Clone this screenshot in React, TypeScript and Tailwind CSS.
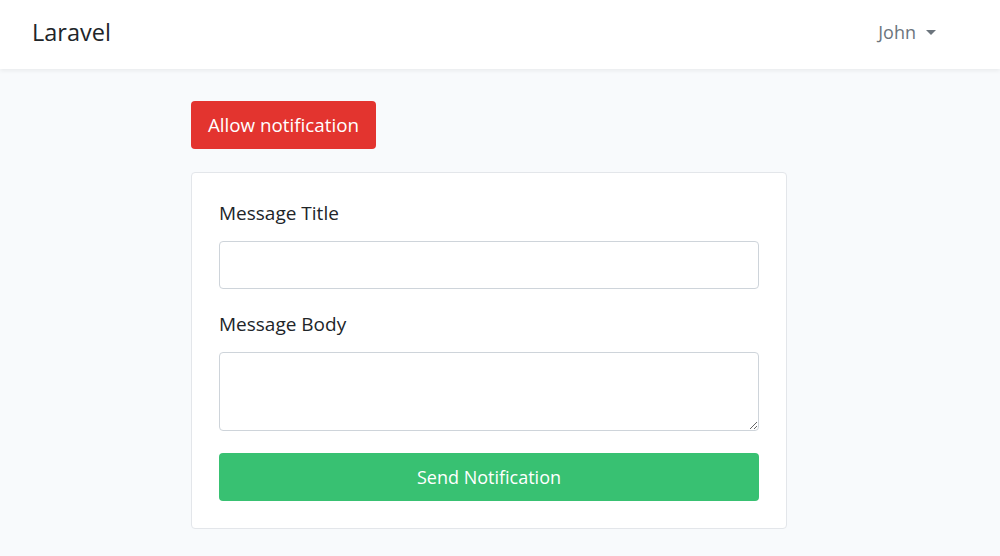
export default function App() {
  const font = { fontFamily: '"Open Sans", "Noto Sans", sans-serif' };
  return (
    <div className="min-h-[556px] bg-[#f8fafc] text-[#212529]" style={font}>
      <nav className="h-[69px] bg-white shadow-[0_2px_4px_rgba(0,0,0,0.06)] flex items-center justify-between pl-[32px] pr-[64px] pb-[4px]">
        <span className="text-[23.5px] text-[#212529]">Laravel</span>
        <span className="flex items-center gap-[10px] text-[18px] text-[#6c757d]">
          John
          <span className="w-0 h-0 border-l-[5.5px] border-r-[5.5px] border-t-[5.5px] border-l-transparent border-r-transparent border-t-[#6c757d]" />
        </span>
      </nav>
      <main className="pl-[191px] pt-[32px]">
        <button className="h-[48px] w-[185px] rounded-[4px] bg-[#e3342f] text-white text-[18.8px]">
          Allow notification
        </button>
        <div className="mt-[23px] w-[596px] bg-white border border-[#e3e6ea] rounded-[4px] px-[27px] pt-[27px] pb-[27px]">
          <label className="block text-[19px] leading-[27px]">Message Title</label>
          <input className="mt-[14px] block w-full h-[48px] border border-[#ced4da] rounded-[4px] bg-white" />
          <label className="block mt-[22px] text-[19px] leading-[27px]">Message Body</label>
          <textarea className="mt-[14px] block w-full h-[79px] border border-[#ced4da] rounded-[4px] bg-white" />
          <button className="mt-[22px] w-full h-[48px] rounded-[4px] bg-[#38c172] text-white text-[18px]">
            Send Notification
          </button>
        </div>
      </main>
    </div>
  );
}
